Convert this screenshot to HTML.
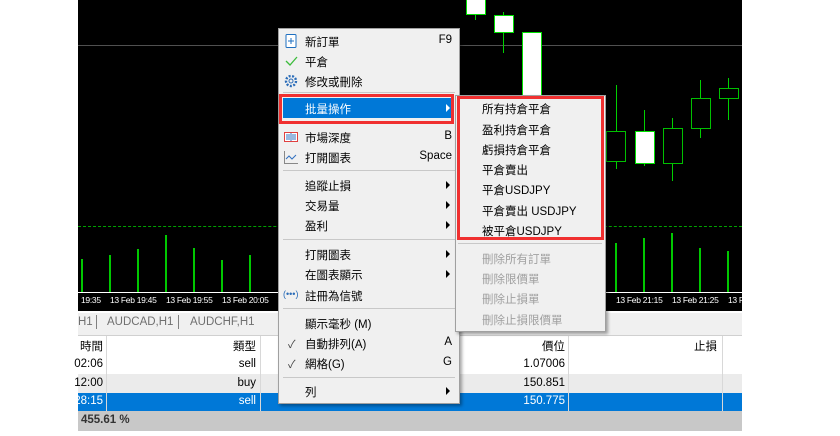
<!DOCTYPE html>
<html><head><meta charset="utf-8"><style>
*{margin:0;padding:0;box-sizing:border-box}
body{width:840px;height:436px;background:#fff;position:relative;overflow:hidden;font-family:"Liberation Sans","Noto Sans CJK TC",sans-serif;font-size:11px;color:#000}
.a{position:absolute}
.c{position:absolute;background:#fff;border:1px solid #00e000}
.cd{position:absolute;background:#000;border:1px solid #00c000}
.w{position:absolute;width:1px;background:#00d000}
.v{position:absolute;width:2px;background:#00c800;bottom:144px}
.t{position:absolute;top:295px;color:#fff;font-size:8.5px;letter-spacing:-0.3px;white-space:nowrap}
.mi{position:absolute;left:305px;font-size:11.5px;white-space:nowrap}
.sc{position:absolute;right:388px;font-size:11.5px}
.ar{position:absolute;left:446px;width:0;height:0;border-left:4px solid #000;border-top:4px solid transparent;border-bottom:4px solid transparent}
.sep{position:absolute;left:283px;width:172px;height:1px;background:#c8c8c8}
.si{position:absolute;left:482px;font-size:11.5px;white-space:nowrap}
.dis{color:#a0a0a0}
.r{position:absolute;text-align:right;font-size:11.5px}
</style></head><body>
<div class="a" style="left:78px;top:0;width:664px;height:311px;background:#000"></div>
<div class="a" style="left:78px;top:45px;width:664px;height:1px;background:#505050"></div>
<div class="a" style="left:78px;top:226px;width:664px;border-top:1px dashed #00a000"></div>
<div class="a" style="left:78px;top:311px;width:664px;height:2px;background:#fff"></div>
<!-- candles -->
<div class="w" style="left:475px;top:0;height:20px"></div><div class="c" style="left:466px;top:-2px;width:20px;height:17px"></div>
<div class="w" style="left:503px;top:12px;height:41px"></div><div class="c" style="left:494px;top:15px;width:20px;height:18px"></div>
<div class="c" style="left:522px;top:32px;width:20px;height:80px"></div>
<div class="w" style="left:616px;top:85px;height:84px"></div><div class="cd" style="left:606px;top:131px;width:20px;height:31px"></div>
<div class="w" style="left:644px;top:110px;height:56px"></div><div class="c" style="left:635px;top:131px;width:20px;height:33px"></div>
<div class="w" style="left:672px;top:118px;height:63px"></div><div class="cd" style="left:663px;top:128px;width:20px;height:36px"></div>
<div class="w" style="left:700px;top:80px;height:58px"></div><div class="cd" style="left:691px;top:98px;width:20px;height:31px"></div>
<div class="w" style="left:728px;top:78px;height:42px"></div><div class="cd" style="left:719px;top:88px;width:20px;height:11px"></div>
<!-- volumes -->
<div class="v" style="left:81px;top:259px"></div><div class="v" style="left:109px;top:255px"></div><div class="v" style="left:137px;top:249px"></div><div class="v" style="left:165px;top:235px"></div><div class="v" style="left:193px;top:248px"></div><div class="v" style="left:221px;top:260px"></div><div class="v" style="left:249px;top:255px"></div>
<div class="v" style="left:615px;top:243px"></div><div class="v" style="left:643px;top:238px"></div><div class="v" style="left:671px;top:233px"></div><div class="v" style="left:699px;top:248px"></div><div class="v" style="left:727px;top:251px"></div>
<div class="a" style="left:78px;top:292px;width:664px;height:1px;background:#fff"></div>
<div class="t" style="left:81px">19:35</div><div class="t" style="left:110px">13 Feb 19:45</div><div class="t" style="left:166px">13 Feb 19:55</div><div class="t" style="left:222px">13 Feb 20:05</div>
<div class="t" style="left:616px">13 Feb 21:15</div><div class="t" style="left:672px">13 Feb 21:25</div><div class="t" style="left:728px">13 F</div>
<!-- tabs -->
<div class="a" style="left:78px;top:313px;width:664px;height:22px;background:#f0f0f0"></div>
<div class="a" style="left:78px;top:316px;color:#707070;font-size:11.5px">H1</div>
<div class="a" style="left:96px;top:315px;width:1px;height:14px;background:#808080"></div>
<div class="a" style="left:107px;top:316px;color:#707070;font-size:11.5px">AUDCAD,H1</div>
<div class="a" style="left:178px;top:315px;width:1px;height:14px;background:#808080"></div>
<div class="a" style="left:190px;top:316px;color:#707070;font-size:11.5px">AUDCHF,H1</div>
<!-- table -->
<div class="a" style="left:78px;top:335px;width:664px;height:1px;background:#d0d0d0"></div>
<div class="a" style="left:78px;top:374px;width:664px;height:19px;background:#ebebeb"></div>
<div class="a" style="left:78px;top:393px;width:664px;height:18px;background:#0078d7"></div>
<div class="a" style="left:78px;top:411px;width:664px;height:20px;background:#c8c8c8"></div>
<div class="a" style="left:106px;top:336px;width:1px;height:75px;background:#d8d8d8"></div>
<div class="a" style="left:260px;top:336px;width:1px;height:75px;background:#d8d8d8"></div>
<div class="a" style="left:568px;top:336px;width:1px;height:75px;background:#d8d8d8"></div>
<div class="a" style="left:722px;top:336px;width:1px;height:75px;background:#d8d8d8"></div>
<div class="r" style="left:60px;width:43px;top:338px">時間</div><div class="r" style="left:150px;width:106px;top:338px">類型</div><div class="r" style="left:450px;width:115px;top:338px">價位</div><div class="r" style="left:600px;width:117px;top:338px">止損</div>
<div class="r" style="left:60px;width:43px;top:358px">02:06</div><div class="r" style="left:150px;width:106px;top:358px">sell</div><div class="r" style="left:450px;width:115px;top:358px">1.07006</div>
<div class="r" style="left:60px;width:43px;top:377px">12:00</div><div class="r" style="left:150px;width:106px;top:377px">buy</div><div class="r" style="left:450px;width:115px;top:377px">150.851</div>
<div class="r" style="left:60px;width:43px;top:395px;color:#fff">28:15</div><div class="r" style="left:150px;width:106px;top:395px;color:#fff">sell</div><div class="r" style="left:450px;width:115px;top:395px;color:#fff">150.775</div>
<div class="a" style="left:81px;top:414px;font-weight:bold;font-size:11.5px;color:#333">455.61 %</div>
<!-- menu -->
<div class="a" style="left:278px;top:28px;width:182px;height:376px;background:#f0f0f0;border:1px solid #a0a0a0;box-shadow:2px 2px 3px rgba(0,0,0,.35)"></div>
<svg class="a" style="left:283px;top:33px" width="16" height="16"><rect x="3" y="1.5" width="10" height="13" rx="1" fill="#fff" stroke="#1e6fc0"/><path d="M8 5v6M5 8h6" stroke="#1e6fc0"/></svg>
<svg class="a" style="left:283px;top:53px" width="16" height="16"><path d="M3 8l4 4 7-8" fill="none" stroke="#3cbc3c" stroke-width="1.3"/></svg>
<svg class="a" style="left:283px;top:73px" width="16" height="16"><circle cx="8" cy="8" r="5" fill="none" stroke="#2a6cb8" stroke-width="2.4" stroke-dasharray="2 1.5"/><circle cx="8" cy="8" r="2" fill="none" stroke="#2a6cb8"/></svg>
<div class="mi" style="top:34px">新訂單</div><div class="sc" style="top:34px">F9</div>
<div class="mi" style="top:54px">平倉</div>
<div class="mi" style="top:74px">修改或刪除</div>
<div class="sep" style="top:92px"></div>
<div class="a" style="left:283px;top:98px;width:168px;height:20px;background:#0078d7"></div>
<div class="mi" style="top:101px;color:#fff">批量操作</div>
<div class="ar" style="top:104px;border-left-color:#fff"></div>
<div class="a" style="left:279px;top:94px;width:175px;height:30px;border:3px solid #f03030"></div>
<svg class="a" style="left:283px;top:129px" width="16" height="16"><rect x="1.5" y="3.5" width="13" height="9" fill="#fff" stroke="#e04040"/><path d="M8 4v8M3 6h4M3 8h4M3 10h4M9 6h4M9 8h4M9 10h4" stroke="#3070c0"/></svg>
<svg class="a" style="left:283px;top:149px" width="16" height="16"><path d="M1.5 2v12.5H15" fill="none" stroke="#888"/><path d="M3 10l3-3 3 3 4-4" fill="none" stroke="#3070c0"/></svg>
<div class="mi" style="top:130px">市場深度</div><div class="sc" style="top:130px">B</div>
<div class="mi" style="top:150px">打開圖表</div><div class="sc" style="top:150px">Space</div>
<div class="sep" style="top:170px"></div>
<div class="mi" style="top:178px">追蹤止損</div><div class="ar" style="top:181px"></div>
<div class="mi" style="top:198px">交易量</div><div class="ar" style="top:201px"></div>
<div class="mi" style="top:218px">盈利</div><div class="ar" style="top:221px"></div>
<div class="sep" style="top:239px"></div>
<div class="mi" style="top:247px">打開圖表</div><div class="ar" style="top:250px"></div>
<div class="mi" style="top:267px">在圖表顯示</div><div class="ar" style="top:270px"></div>
<div class="a" style="left:283px;top:289px;font-size:9px;color:#2a6cb8">(•••)</div>
<div class="mi" style="top:288px">註冊為信號</div>
<div class="sep" style="top:308px"></div>
<div class="mi" style="top:316px">顯示毫秒 (M)</div>
<div class="a" style="left:288px;top:336px;font-size:11px;color:#444">✓</div>
<div class="mi" style="top:336px">自動排列(A)</div><div class="sc" style="top:336px">A</div>
<div class="a" style="left:288px;top:356px;font-size:11px;color:#444">✓</div>
<div class="mi" style="top:356px">網格(G)</div><div class="sc" style="top:356px">G</div>
<div class="sep" style="top:377px"></div>
<div class="mi" style="top:384px">列</div><div class="ar" style="top:387px"></div>
<!-- submenu -->
<div class="a" style="left:455px;top:95px;width:151px;height:237px;background:#f0f0f0;border:1px solid #a0a0a0;box-shadow:2px 2px 3px rgba(0,0,0,.35)"></div>
<div class="a" style="left:457px;top:96px;width:147px;height:144px;border:3px solid #f03030"></div>
<div class="si" style="top:101px">所有持倉平倉</div>
<div class="si" style="top:122px">盈利持倉平倉</div>
<div class="si" style="top:142px">虧損持倉平倉</div>
<div class="si" style="top:162px">平倉賣出</div>
<div class="si" style="top:182px">平倉USDJPY</div>
<div class="si" style="top:203px">平倉賣出 USDJPY</div>
<div class="si" style="top:223px">被平倉USDJPY</div>
<div class="a" style="left:458px;top:243px;width:144px;height:1px;background:#c8c8c8"></div>
<div class="si dis" style="top:251px">刪除所有訂單</div>
<div class="si dis" style="top:271px">刪除限價單</div>
<div class="si dis" style="top:291px">刪除止損單</div>
<div class="si dis" style="top:312px">刪除止損限價單</div>
</body></html>
